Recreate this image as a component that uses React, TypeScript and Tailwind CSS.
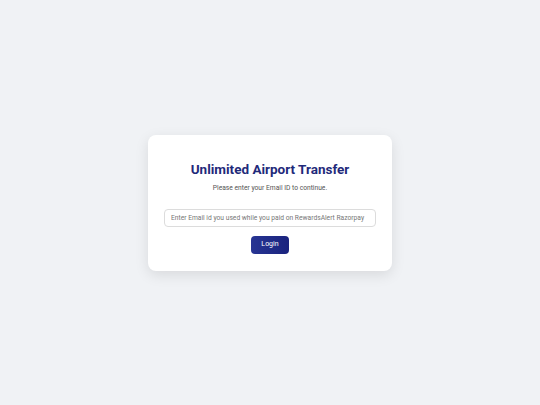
import React, { useState } from 'react';

export default function App() {
  const [email, setEmail] = useState('');

  return (
    <div
      className="flex h-screen w-full items-center justify-center bg-[#f0f2f5]"
      style={{ fontFamily: 'Roboto, "Liberation Sans", sans-serif' }}
    >
      <div className="flex w-[244px] flex-col items-center rounded-lg bg-white px-4 pt-[26px] pb-[17px] shadow-[0_4px_14px_rgba(0,0,0,0.1)]">
        <h1 className="text-[13.5px] leading-[16px] font-bold text-[#1f2a7a]">Unlimited Airport Transfer</h1>
        <p className="mt-[7.5px] text-[6.7px] leading-[9px] text-[#555]">Please enter your Email ID to continue.</p>
        <input
          type="email"
          value={email}
          onChange={(e) => setEmail(e.target.value)}
          placeholder="Enter Email id you used while you paid on RewardsAlert Razorpay"
          className="mt-[15.5px] h-[18px] w-full rounded-[4px] border border-[#dcdcdc] px-[6px] text-[6.7px] text-[#333] outline-none placeholder:text-[#777]"
        />
        <button className="mt-[9px] h-[18px] w-[38px] rounded-[4px] bg-gradient-to-r from-[#283593] to-[#1a237e] text-[7px] font-normal text-white">
          Login
        </button>
      </div>
    </div>
  );
}
